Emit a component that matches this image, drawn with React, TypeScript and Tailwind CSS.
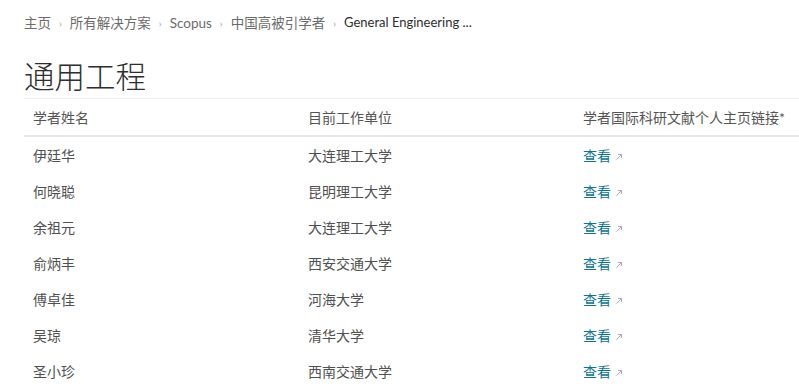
const crumbs = ['主页', '所有解决方案', 'Scopus', '中国高被引学者'];

const rows = [
  { name: '伊廷华', org: '大连理工大学' },
  { name: '何晓聪', org: '昆明理工大学' },
  { name: '余祖元', org: '大连理工大学' },
  { name: '俞炳丰', org: '西安交通大学' },
  { name: '傅卓佳', org: '河海大学' },
  { name: '吴琼', org: '清华大学' },
  { name: '圣小珍', org: '西南交通大学' },
];

const font = { fontFamily: '"Lato", "Noto Sans CJK SC", sans-serif' };

const ExternalArrow = () => (
  <svg width="8" height="8" viewBox="0 0 8 8" className="ml-[4px] mt-[3px]">
    <path d="M1.5 6.5 L6.5 1.5 M3 1.5 H6.5 V5" fill="none" stroke="#a0a0a0" strokeWidth="0.9" />
  </svg>
);

const App = () => {
  return (
    <div className="w-[799px] h-[391px] overflow-hidden bg-white" style={font}>
      <div className="pl-[24px]">
        <nav className="flex items-center h-[20px] mt-[13px] text-[13.5px] text-[#6b6b6b]">
          {crumbs.map((c) => (
            <span key={c} className="flex items-center">
              <span>{c}</span>
              <span className="mx-[8px] text-[10px] text-[#9a9a9a]">›</span>
            </span>
          ))}
          <span className="text-[13px] text-[#2e2e2e]">General Engineering ...</span>
        </nav>
        <h1 className="mt-[23px] h-[40px] text-[30.5px] leading-[40px] font-light text-[#2e2e2e]">通用工程</h1>

        <div className="mt-[2px] w-[850px] border-t border-[#efefef]">
          <div className="grid grid-cols-[275px_275px_300px] h-[38px] items-center border-b-2 border-[#e8e8e8] text-[14px] text-[#555]">
            <div className="pl-[9px]">学者姓名</div>
            <div className="pl-[9px]">目前工作单位</div>
            <div className="pl-[9px]">学者国际科研文献个人主页链接*</div>
          </div>
          {rows.map((r) => (
            <div
              key={r.name}
              className="grid grid-cols-[275px_275px_300px] h-[36px] items-center text-[14px] text-[#505050]"
            >
              <div className="pl-[9px]">{r.name}</div>
              <div className="pl-[9px]">{r.org}</div>
              <div className="pl-[9px] flex items-center">
                <span className="text-[#0c7394]">查看</span>
                <ExternalArrow />
              </div>
            </div>
          ))}
        </div>
      </div>
    </div>
  );
};

export default App;
